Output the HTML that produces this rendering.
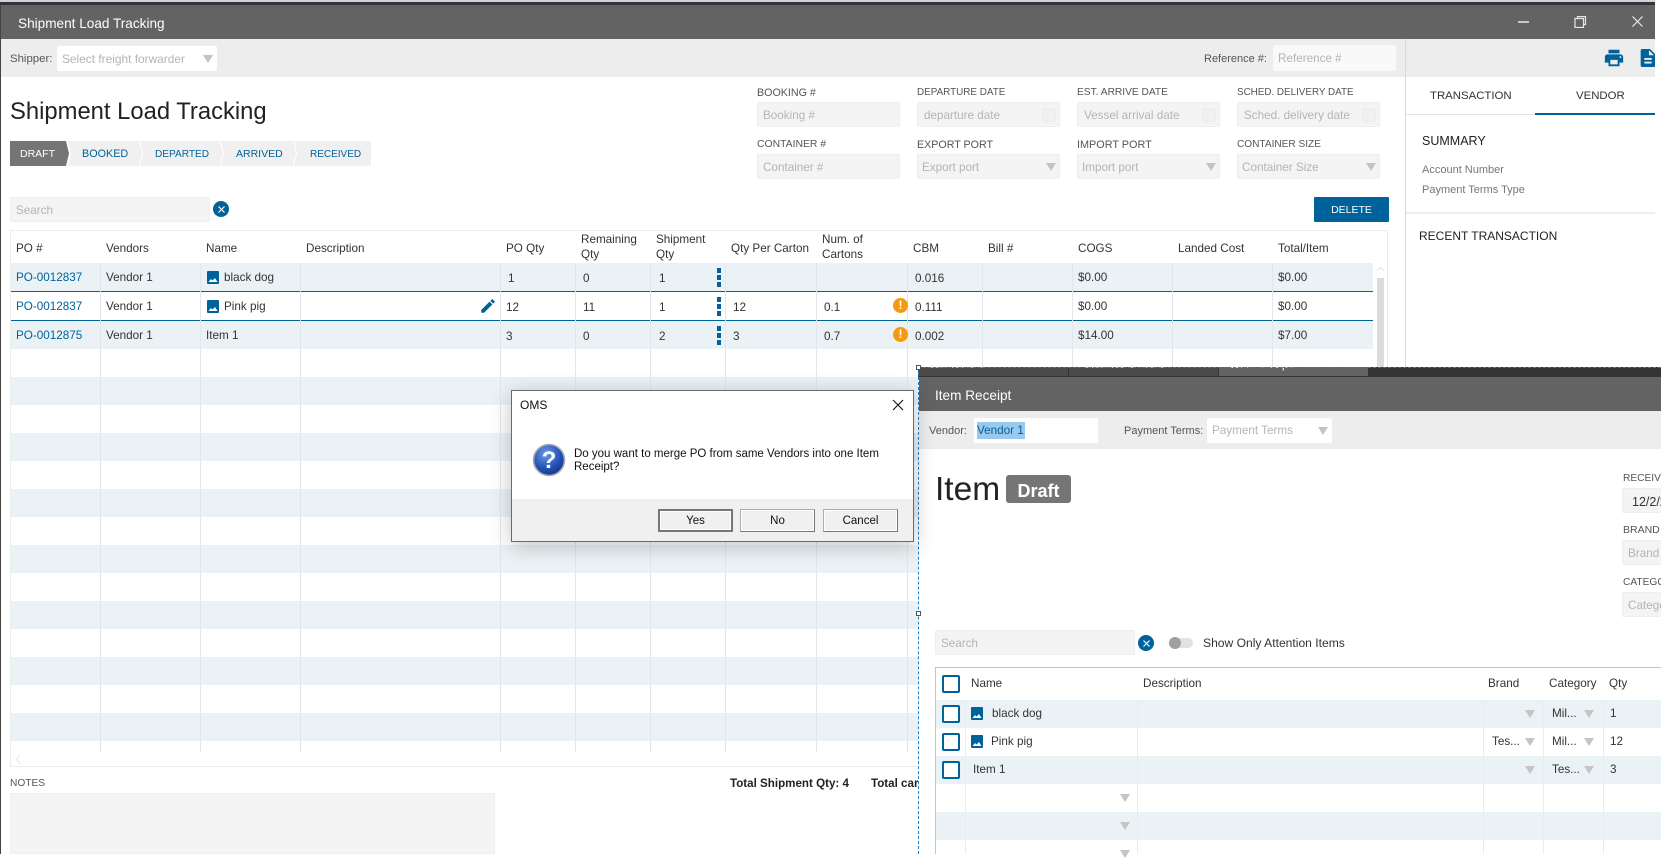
<!DOCTYPE html>
<html><head><meta charset="utf-8"><title>Shipment Load Tracking</title>
<style>
html,body{margin:0;padding:0;background:#fff}
body{position:relative;width:1661px;height:854px;overflow:hidden;font-family:"Liberation Sans",sans-serif;font-size:11.7px;color:#333}
div,span,svg{position:absolute;box-sizing:border-box}
.t{white-space:nowrap;line-height:16px;height:16px;margin-top:1px}
.p{color:#b4b4b4}
.l{color:#00629b}
.u{color:#555;font-size:10.5px}
.b{background:#f4f4f4;border:1px solid #eee;border-radius:2px}
.a{width:0;height:0;border-left:5px solid transparent;border-right:5px solid transparent;border-top:8px solid #c4c4c4}
.v{width:1px;background:#e0e8ec}
.x{background:#00629b;border-radius:50%;width:16px;height:16px}
.s{top:141px;height:25px;background:#f0f0f0;clip-path:polygon(0 0,calc(100% - 3px) 0,100% 50%,calc(100% - 3px) 100%,0 100%,3px 50%)}
.d{width:4px;height:5px;background:#00629b}
.w{width:15px;height:15px;border-radius:50%;background:#f59a0e;color:#fff;font-weight:bold;font-size:12px;line-height:15px;text-align:center}
.c{width:18px;height:18px;border:2px solid #00629b;border-radius:2px;background:#fff}
.btn{height:23px;width:75px;background:#f0f0f0;border:1px solid #adadad;border-right-color:#777;border-bottom-color:#777;text-align:center;line-height:23px;font-size:11.5px;color:#111;box-shadow:inset 0 0 0 1px #fff}
</style></head><body>

<!-- top strip -->
<div style="left:0;top:0;width:1655px;height:2px;background:#ccd3df"></div>
<div style="left:0;top:2px;width:1655px;height:3px;background:#343434"></div>
<div style="left:0;top:5px;width:1px;height:849px;background:#444"></div>
<div style="left:1px;top:5px;width:1654px;height:34px;background:#636363"></div>
<span class="t" style="left:18px;top:15px;color:#fff;font-size:13.6px">Shipment Load Tracking</span>
<!-- window controls -->
<div style="left:1518px;top:21px;width:11px;height:2px;background:#c8c8c8"></div>
<svg style="left:1574px;top:16px" width="13" height="12" viewBox="0 0 13 12"><path d="M3.5 2.5V.5h8v8h-2M1 2.5h8.5v9H1z" fill="none" stroke="#e8e8e8" stroke-width="1.2"/></svg>
<svg style="left:1632px;top:16px" width="11" height="11" viewBox="0 0 11 11"><path d="M.5.5l10 10M10.5.5l-10 10" stroke="#f2f2f2" stroke-width="1.1"/></svg>

<!-- toolbar -->
<div style="left:1px;top:39px;width:1654px;height:38px;background:#ededed"></div>
<span class="t" style="left:10px;top:50px;color:#555;font-size:11.4px">Shipper:</span>
<div style="left:57px;top:46px;width:160px;height:25px;background:#fff;border-radius:2px"></div>
<span class="t p" style="left:62px;top:50px;font-size:11.9px">Select freight forwarder</span>
<div class="a" style="left:203px;top:55px"></div>
<span class="t" style="left:1204px;top:50px;color:#555;font-size:11px">Reference #:</span>
<div style="left:1273px;top:45px;width:123px;height:26px;background:#f9f9f9;border-radius:2px"></div>
<span class="t p" style="left:1278px;top:50px">Reference #</span>

<!-- heading -->
<span class="t" style="left:10px;top:98px;height:26px;line-height:26px;font-size:23.8px;color:#222">Shipment Load Tracking</span>

<!-- steps -->
<div style="left:10px;top:141px;width:59px;height:25px;background:#757575;clip-path:polygon(0 0,56px 0,100% 50%,56px 100%,0 100%)"></div>
<span class="t" style="left:20px;top:145px;color:#fff;font-size:10.5px">DRAFT</span>
<div class="s" style="left:68px;width:74px"></div>
<div class="s" style="left:140px;width:83px"></div>
<div class="s" style="left:221px;width:75px"></div>
<div class="s" style="left:294px;width:77px;clip-path:polygon(0 0,100% 0,100% 100%,0 100%,3px 50%)"></div>
<span class="t l" style="left:82px;top:145px;font-size:10.8px">BOOKED</span>
<span class="t l" style="left:155px;top:146px;font-size:10.1px">DEPARTED</span>
<span class="t l" style="left:236px;top:145px;font-size:10.5px">ARRIVED</span>
<span class="t l" style="left:310px;top:146px;font-size:10px">RECEIVED</span>

<!-- form -->
<span class="t u" style="left:757px;top:84px;font-size:10.7px">BOOKING #</span>
<span class="t u" style="left:917px;top:84px;font-size:9.9px">DEPARTURE DATE</span>
<span class="t u" style="left:1077px;top:84px;font-size:10.2px">EST. ARRIVE DATE</span>
<span class="t u" style="left:1237px;top:84px;font-size:9.85px">SCHED. DELIVERY DATE</span>
<div class="b" style="left:757px;top:102px;width:143px;height:25px"></div>
<div class="b" style="left:917px;top:102px;width:143px;height:25px"></div>
<div class="b" style="left:1077px;top:102px;width:143px;height:25px"></div>
<div class="b" style="left:1237px;top:102px;width:143px;height:25px"></div>
<span class="t p" style="left:763px;top:107px">Booking #</span>
<span class="t p" style="left:924px;top:107px">departure date</span>
<span class="t p" style="left:1084px;top:107px">Vessel arrival date</span>
<span class="t p" style="left:1244px;top:107px">Sched. delivery date</span>
<svg style="left:1042px;top:107px" width="14" height="15"><rect x=".5" y="1.5" width="13" height="13" rx="2" fill="#f0f0f0" stroke="#ebebeb"/></svg>
<svg style="left:1202px;top:107px" width="14" height="15"><rect x=".5" y="1.5" width="13" height="13" rx="2" fill="#f0f0f0" stroke="#ebebeb"/></svg>
<svg style="left:1362px;top:107px" width="14" height="15"><rect x=".5" y="1.5" width="13" height="13" rx="2" fill="#f0f0f0" stroke="#ebebeb"/></svg>
<span class="t u" style="left:757px;top:136px;font-size:10.4px">CONTAINER #</span>
<span class="t u" style="left:917px;top:136px;font-size:10.7px">EXPORT PORT</span>
<span class="t u" style="left:1077px;top:136px;font-size:10.85px">IMPORT PORT</span>
<span class="t u" style="left:1237px;top:136px;font-size:10.1px">CONTAINER SIZE</span>
<div class="b" style="left:757px;top:154px;width:143px;height:25px"></div>
<div class="b" style="left:917px;top:154px;width:143px;height:25px"></div>
<div class="b" style="left:1077px;top:154px;width:143px;height:25px"></div>
<div class="b" style="left:1237px;top:154px;width:143px;height:25px"></div>
<span class="t p" style="left:763px;top:159px">Container #</span>
<span class="t p" style="left:922px;top:159px">Export port</span>
<span class="t p" style="left:1082px;top:159px">Import port</span>
<span class="t p" style="left:1242px;top:159px">Container Size</span>
<div class="a" style="left:1046px;top:163px"></div>
<div class="a" style="left:1206px;top:163px"></div>
<div class="a" style="left:1366px;top:163px"></div>

<!-- search & delete -->
<div class="b" style="left:10px;top:197px;width:200px;height:25px"></div>
<span class="t p" style="left:16px;top:202px">Search</span>
<div class="x" style="left:213px;top:201px"><svg style="left:4.5px;top:4.5px" width="7" height="7"><path d="M.5.5l6 6M6.500.5l-6 6" stroke="#fff" stroke-width="1.2"/></svg></div>
<div style="left:1314px;top:197px;width:75px;height:25px;background:#00629b;border-radius:1px;color:#fff;text-align:center;line-height:26px;font-size:10.5px">DELETE</div>

<!-- table -->
<div style="left:10px;top:230px;width:1378px;height:537px;border:1px solid #ececec;background:#fff"></div>
<div style="left:11px;top:263px;width:1362px;height:28px;background:#ebf2f6"></div>
<div style="left:11px;top:320px;width:1362px;height:29px;background:#ebf2f6"></div>
<div style="left:11px;top:349px;width:1362px;height:392px;background:repeating-linear-gradient(to bottom,#fff 0,#fff 28px,#ebf2f6 28px,#ebf2f6 56px)"></div>
<div style="left:11px;top:291px;width:1362px;height:1px;background:#00629b"></div>
<div style="left:11px;top:320px;width:1362px;height:1px;background:#00629b"></div>
<div class="v" style="left:100px;top:263px;height:489px"></div>
<div class="v" style="left:200px;top:263px;height:489px"></div>
<div class="v" style="left:300px;top:263px;height:489px"></div>
<div class="v" style="left:500px;top:263px;height:489px"></div>
<div class="v" style="left:575px;top:263px;height:489px"></div>
<div class="v" style="left:650px;top:263px;height:489px"></div>
<div class="v" style="left:725px;top:263px;height:489px"></div>
<div class="v" style="left:816px;top:263px;height:489px"></div>
<div class="v" style="left:907px;top:263px;height:489px"></div>
<div class="v" style="left:982px;top:263px;height:489px"></div>
<div class="v" style="left:1072px;top:263px;height:489px"></div>
<div class="v" style="left:1172px;top:263px;height:489px"></div>
<div class="v" style="left:1272px;top:263px;height:489px"></div>
<div style="left:1377px;top:278px;width:7px;height:90px;background:#dcdcdc"></div>
<svg style="left:1376px;top:266px" width="9" height="7"><path d="M1 5l3.500-3.500L8 5" fill="none" stroke="#e4e4e4"/></svg>
<svg style="left:15px;top:754px" width="7" height="11"><path d="M5 1L1.500 5.500 5 10" fill="none" stroke="#e4e4e4"/></svg>

<!-- header texts -->
<span class="t" style="left:16px;top:240px">PO #</span>
<span class="t" style="left:106px;top:240px">Vendors</span>
<span class="t" style="left:206px;top:240px">Name</span>
<span class="t" style="left:306px;top:240px">Description</span>
<span class="t" style="left:506px;top:240px">PO Qty</span>
<span class="t" style="left:581px;top:231px">Remaining</span><span class="t" style="left:581px;top:246px">Qty</span>
<span class="t" style="left:656px;top:231px">Shipment</span><span class="t" style="left:656px;top:246px">Qty</span>
<span class="t" style="left:731px;top:240px">Qty Per Carton</span>
<span class="t" style="left:822px;top:231px">Num. of</span><span class="t" style="left:822px;top:246px">Cartons</span>
<span class="t" style="left:913px;top:240px">CBM</span>
<span class="t" style="left:988px;top:240px">Bill #</span>
<span class="t" style="left:1078px;top:240px">COGS</span>
<span class="t" style="left:1178px;top:240px">Landed Cost</span>
<span class="t" style="left:1278px;top:240px">Total/Item</span>

<!-- row 1 -->
<span class="t l" style="left:16px;top:269px">PO-0012837</span>
<span class="t" style="left:106px;top:269px">Vendor 1</span>
<svg style="left:207px;top:271px" width="12" height="13" viewBox="0 0 12 13"><rect width="12" height="13" rx="1" fill="#00629b"/><path d="M1.500 11l2.500-3 1.500 1.500L8 7l2.500 4z" fill="#fff"/></svg>
<span class="t" style="left:224px;top:269px">black dog</span>
<span class="t" style="left:508px;top:270px">1</span>
<span class="t" style="left:583px;top:270px">0</span>
<span class="t" style="left:659px;top:270px">1</span>
<div class="d" style="left:717px;top:268px"></div><div class="d" style="left:717px;top:275px"></div><div class="d" style="left:717px;top:282px"></div>
<span class="t" style="left:915px;top:270px">0.016</span>
<span class="t" style="left:1078px;top:269px">$0.00</span>
<span class="t" style="left:1278px;top:269px">$0.00</span>

<!-- row 2 -->
<span class="t l" style="left:16px;top:298px">PO-0012837</span>
<span class="t" style="left:106px;top:298px">Vendor 1</span>
<svg style="left:207px;top:300px" width="12" height="13" viewBox="0 0 12 13"><rect width="12" height="13" rx="1" fill="#00629b"/><path d="M1.500 11l2.500-3 1.500 1.500L8 7l2.500 4z" fill="#fff"/></svg>
<span class="t" style="left:224px;top:298px">Pink pig</span>
<svg style="left:479px;top:297px" width="18" height="18" viewBox="0 0 24 24"><path fill="#00629b" d="M3 17.250V21h3.750L17.810 9.940l-3.750-3.750L3 17.250zM20.710 7.040c.39-.39.39-1.020 0-1.410l-2.340-2.340c-.39-.39-1.020-.39-1.410 0l-1.830 1.830 3.750 3.750 1.830-1.830z"/></svg>
<span class="t" style="left:506px;top:299px">12</span>
<span class="t" style="left:583px;top:299px">11</span>
<span class="t" style="left:659px;top:299px">1</span>
<div class="d" style="left:717px;top:297px"></div><div class="d" style="left:717px;top:304px"></div><div class="d" style="left:717px;top:311px"></div>
<span class="t" style="left:733px;top:299px">12</span>
<span class="t" style="left:824px;top:299px">0.1</span>
<div class="w" style="left:893px;top:298px">!</div>
<span class="t" style="left:915px;top:299px">0.111</span>
<span class="t" style="left:1078px;top:298px">$0.00</span>
<span class="t" style="left:1278px;top:298px">$0.00</span>

<!-- row 3 -->
<span class="t l" style="left:16px;top:327px">PO-0012875</span>
<span class="t" style="left:106px;top:327px">Vendor 1</span>
<span class="t" style="left:206px;top:327px">Item 1</span>
<span class="t" style="left:506px;top:328px">3</span>
<span class="t" style="left:583px;top:328px">0</span>
<span class="t" style="left:659px;top:328px">2</span>
<div class="d" style="left:717px;top:326px"></div><div class="d" style="left:717px;top:333px"></div><div class="d" style="left:717px;top:340px"></div>
<span class="t" style="left:733px;top:328px">3</span>
<span class="t" style="left:824px;top:328px">0.7</span>
<div class="w" style="left:893px;top:327px">!</div>
<span class="t" style="left:915px;top:328px">0.002</span>
<span class="t" style="left:1078px;top:327px">$14.00</span>
<span class="t" style="left:1278px;top:327px">$7.00</span>

<!-- notes / totals -->
<span class="t" style="left:10px;top:775px;color:#555;font-size:10.2px">NOTES</span>
<div style="left:10px;top:793px;width:485px;height:61px;background:#f4f4f4;border:1px solid #eee"></div>
<span class="t" style="left:730px;top:775px;font-weight:bold;font-size:11.6px;color:#222">Total Shipment Qty: 4</span>
<span class="t" style="left:871px;top:775px;font-weight:bold;font-size:11.6px;color:#222">Total cartons</span>

<!-- right panel -->
<div style="left:1405px;top:39px;width:1px;height:330px;background:#d8d8d8"></div>
<div style="left:1406px;top:77px;width:255px;height:290px;background:#fff"></div>
<div style="left:1655px;top:0;width:6px;height:367px;background:#fff"></div>
<svg style="left:1603px;top:47px" width="22" height="22" viewBox="0 0 24 24"><path fill="#00629b" d="M19 8H5c-1.660 0-3 1.340-3 3v6h4v4h12v-4h4v-6c0-1.660-1.340-3-3-3zm-3 11H8v-5h8v5zm3-7c-.55 0-1-.45-1-1s.45-1 1-1 1 .45 1 1-.45 1-1 1zm-1-9H6v4h12V3z"/></svg>
<div style="left:1640px;top:49px;width:15px;height:18px;overflow:hidden"><svg style="left:-3px;top:-2px" width="22" height="22" viewBox="0 0 24 24"><path fill="#00629b" d="M14 2H6c-1.100 0-2 .9-2 2v16c0 1.100.89 2 1.990 2H18c1.100 0 2-.9 2-2V8l-6-6zm2 16H8v-2h8v2zm0-4H8v-2h8v2zm-3-5V3.500L18.500 9H13z"/></svg></div>
<span class="t" style="left:1430px;top:87px;font-size:11.4px;color:#333">TRANSACTION</span>
<span class="t" style="left:1576px;top:87px;font-size:11.4px;color:#333">VENDOR</span>
<div style="left:1406px;top:114px;width:129px;height:1px;background:#e4e4e4"></div>
<div style="left:1535px;top:113px;width:120px;height:2px;background:#00629b"></div>
<span class="t" style="left:1422px;top:132px;font-size:12.5px;color:#222">SUMMARY</span>
<span class="t" style="left:1422px;top:161px;font-size:11px;color:#777">Account Number</span>
<span class="t" style="left:1422px;top:181px;font-size:11px;color:#777">Payment Terms Type</span>
<div style="left:1406px;top:212px;width:249px;height:2px;background:#eee"></div>
<span class="t" style="left:1419px;top:227px;font-size:12px;color:#222">RECENT TRANSACTION</span>

<!-- second window -->
<div style="left:918px;top:367px;width:743px;height:487px;background:#fff"></div>
<div style="left:918px;top:367px;width:743px;height:10px;background:#343434;overflow:hidden">
  <div style="left:0;top:0;width:150px;height:9px;background:#4a4a4a"></div>
  <div style="left:151px;top:0;width:149px;height:9px;background:#4a4a4a"></div>
  <div style="left:301px;top:0;width:149px;height:9px;background:#636363"></div>
  <span class="t" style="left:9px;top:-11px;color:#ddd;font-size:11.5px">Dashboard</span>
  <span class="t" style="left:159px;top:-11px;color:#ddd;font-size:11.5px">Purchase Orders</span>
  <span class="t" style="left:309px;top:-11px;color:#fff;font-size:11.5px">Item Receipt</span>
</div>
<div style="left:919px;top:377px;width:742px;height:34px;background:#636363"></div>
<span class="t" style="left:935px;top:387px;color:#fff;font-size:13.6px">Item Receipt</span>
<div style="left:919px;top:411px;width:742px;height:38px;background:#ededed"></div>
<span class="t" style="left:929px;top:422px;color:#555;font-size:11px">Vendor:</span>
<div style="left:974px;top:418px;width:124px;height:25px;background:#fff"></div>
<div style="left:977px;top:422px;width:48px;height:17px;background:#99c9ef"></div>
<span class="t" style="left:977px;top:422px;color:#00629b">Vendor 1</span>
<span class="t" style="left:1124px;top:422px;color:#555;font-size:11px">Payment Terms:</span>
<div style="left:1207px;top:418px;width:125px;height:25px;background:#fff;border-radius:2px"></div>
<span class="t p" style="left:1212px;top:422px">Payment Terms</span>
<div class="a" style="left:1318px;top:427px"></div>

<span class="t" style="left:935px;top:467px;height:44px;line-height:44px;font-size:33.5px;color:#222">Item</span>
<div style="left:1006px;top:475px;width:65px;height:28px;background:#757575;border-radius:3px;color:#fff;font-weight:bold;font-size:18px;line-height:32px;text-align:center">Draft</div>

<span class="t u" style="left:1623px;top:470px;font-size:10.2px">RECEIVED DATE</span>
<div class="b" style="left:1622px;top:488px;width:60px;height:25px"></div>
<span class="t" style="left:1632px;top:493px;font-size:12.5px">12/2/2020</span>
<span class="t u" style="left:1623px;top:521px">BRAND</span>
<div class="b" style="left:1622px;top:540px;width:60px;height:25px"></div>
<span class="t p" style="left:1628px;top:545px">Brand</span>
<span class="t u" style="left:1623px;top:574px;font-size:10.2px">CATEGORY</span>
<div class="b" style="left:1622px;top:592px;width:60px;height:25px"></div>
<span class="t p" style="left:1628px;top:597px">Category</span>

<div class="b" style="left:935px;top:630px;width:200px;height:25px"></div>
<span class="t p" style="left:941px;top:635px">Search</span>
<div class="x" style="left:1138px;top:635px"><svg style="left:4.5px;top:4.5px" width="7" height="7"><path d="M.5.5l6 6M6.500.5l-6 6" stroke="#fff" stroke-width="1.2"/></svg></div>
<div style="left:1169px;top:638px;width:24px;height:10px;background:#e2e2e2;border-radius:5px"></div>
<div style="left:1169px;top:637px;width:12px;height:12px;background:#a0a0a0;border-radius:50%"></div>
<span class="t" style="left:1203px;top:634px;font-size:12.1px">Show Only Attention Items</span>

<div style="left:935px;top:667px;width:726px;height:1px;background:#b4c6d8"></div>
<div style="left:935px;top:667px;width:1px;height:187px;background:#b4c6d8"></div>
<div style="left:936px;top:700px;width:725px;height:28px;background:#ebf2f6"></div>
<div style="left:936px;top:756px;width:725px;height:28px;background:#ebf2f6"></div>
<div style="left:936px;top:812px;width:725px;height:28px;background:#ebf2f6"></div>
<div class="v" style="left:965px;top:700px;height:154px;background:#e6ecef"></div>
<div class="v" style="left:1137px;top:700px;height:154px;background:#e6ecef"></div>
<div class="v" style="left:1483px;top:700px;height:154px;background:#e6ecef"></div>
<div class="v" style="left:1543px;top:700px;height:154px;background:#e6ecef"></div>
<div class="v" style="left:1603px;top:700px;height:154px;background:#e6ecef"></div>
<div class="c" style="left:942px;top:675px"></div>
<div class="c" style="left:942px;top:705px"></div>
<div class="c" style="left:942px;top:733px"></div>
<div class="c" style="left:942px;top:761px"></div>
<span class="t" style="left:971px;top:675px">Name</span>
<span class="t" style="left:1143px;top:675px">Description</span>
<span class="t" style="left:1488px;top:675px">Brand</span>
<span class="t" style="left:1549px;top:675px">Category</span>
<span class="t" style="left:1609px;top:675px">Qty</span>
<svg style="left:971px;top:707px" width="12" height="13" viewBox="0 0 12 13"><rect width="12" height="13" rx="1" fill="#00629b"/><path d="M1.500 11l2.500-3 1.500 1.500L8 7l2.500 4z" fill="#fff"/></svg>
<span class="t" style="left:992px;top:705px">black dog</span>
<svg style="left:971px;top:735px" width="12" height="13" viewBox="0 0 12 13"><rect width="12" height="13" rx="1" fill="#00629b"/><path d="M1.500 11l2.500-3 1.500 1.500L8 7l2.500 4z" fill="#fff"/></svg>
<span class="t" style="left:991px;top:733px">Pink pig</span>
<span class="t" style="left:973px;top:761px">Item 1</span>
<span class="t" style="left:1492px;top:733px">Tes...</span>
<span class="t" style="left:1552px;top:705px">Mil...</span>
<span class="t" style="left:1552px;top:733px">Mil...</span>
<span class="t" style="left:1552px;top:761px">Tes...</span>
<span class="t" style="left:1610px;top:705px">1</span>
<span class="t" style="left:1610px;top:733px">12</span>
<span class="t" style="left:1610px;top:761px">3</span>
<div class="a" style="left:1525px;top:710px"></div>
<div class="a" style="left:1525px;top:738px"></div>
<div class="a" style="left:1525px;top:766px"></div>
<div class="a" style="left:1584px;top:710px"></div>
<div class="a" style="left:1584px;top:738px"></div>
<div class="a" style="left:1584px;top:766px"></div>
<div class="a" style="left:1120px;top:794px"></div>
<div class="a" style="left:1120px;top:822px"></div>
<div class="a" style="left:1120px;top:850px"></div>

<!-- dashed selection -->
<div style="left:918px;top:367px;width:743px;height:0;border-top:1px dashed #1e7fcb"></div>
<div style="left:918px;top:367px;width:0;height:487px;border-left:1px dashed #1e7fcb"></div>
<div style="left:916px;top:365px;width:5px;height:5px;background:#fff;border:1px solid #555"></div>
<div style="left:916px;top:611px;width:5px;height:5px;background:#fff;border:1px solid #555"></div>

<!-- dialog -->
<div style="left:511px;top:390px;width:403px;height:152px;background:#fff;border:1px solid #6a6a6a;box-shadow:0 4px 20px rgba(0,0,0,.24)"></div>
<span class="t" style="left:520px;top:396px;font-size:12px;color:#111">OMS</span>
<svg style="left:892px;top:399px" width="12" height="12" viewBox="0 0 12 12"><path d="M1 1l10 10M11 1L1 11" stroke="#111" stroke-width="1.1"/></svg>
<svg style="left:532px;top:443px" width="34" height="34" viewBox="0 0 34 34"><defs><radialGradient id="g" cx=".4" cy=".3" r=".8"><stop offset="0" stop-color="#6f9be8"/><stop offset=".6" stop-color="#2350b4"/><stop offset="1" stop-color="#12307e"/></radialGradient></defs><circle cx="17" cy="17" r="15.5" fill="url(#g)" stroke="#a9adb5" stroke-width="1.6"/><text x="17" y="25" text-anchor="middle" font-family="Liberation Sans" font-weight="bold" font-size="24" fill="#fff">?</text></svg>
<span class="t" style="left:574px;top:445px;font-size:11.5px;color:#111">Do you want to merge PO from same Vendors into one Item</span>
<span class="t" style="left:574px;top:458px;font-size:11.5px;color:#111">Receipt?</span>
<div style="left:512px;top:499px;width:401px;height:42px;background:#f0f0f0"></div>
<div class="btn" style="left:658px;top:509px;border:2px solid #777;line-height:20px">Yes</div>
<div class="btn" style="left:740px;top:509px;line-height:22px">No</div>
<div class="btn" style="left:823px;top:509px;line-height:22px">Cancel</div>

</body></html>
